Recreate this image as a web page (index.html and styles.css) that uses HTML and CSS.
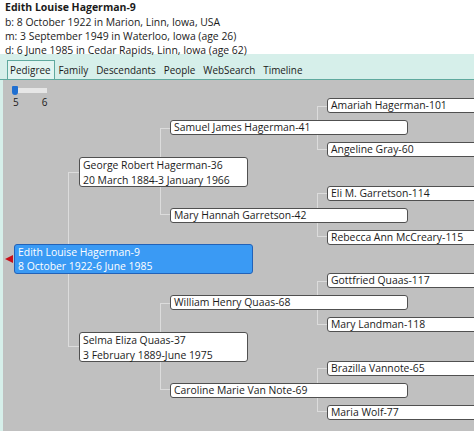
FILE: index.html
```html
<!DOCTYPE html>
<html>
<head>
<meta charset="utf-8">
<link rel="stylesheet" href="styles.css">
</head>
<body>
<div class="header">
  <div class="name">Edith Louise Hagerman-9</div>
  <div class="line">b: 8 October 1922 in Marion, Linn, Iowa, USA</div>
  <div class="line">m: 3 September 1949 in Waterloo, Iowa (age 26)</div>
  <div class="line">d: 6 June 1985 in Cedar Rapids, Linn, Iowa (age 62)</div>
</div>
<div class="tabs-area">
  <div class="tabs">
    <span class="tab active">Pedigree</span>
    <span class="tab">Family</span>
    <span class="tab">Descendants</span>
    <span class="tab">People</span>
    <span class="tab">WebSearch</span>
    <span class="tab">Timeline</span>
  </div>
  <div class="panel">
    <div class="slider">
      <div class="track"><div class="thumb"></div></div>
      <div class="ticks"><span>5</span><span>6</span></div>
    </div>
    <div class="tree">
      <div class="bracket b1 r19"></div>
      <div class="bracket b2 r15"></div>
      <div class="bracket b2 r59"></div>
      <div class="bracket b3 r13"></div>
      <div class="bracket b3 r35"></div>
      <div class="bracket b3 r57"></div>
      <div class="bracket b3 r79"></div>

      <div class="node g0 r19 selected">Edith Louise Hagerman-9<br>8 October 1922-6 June 1985</div>

      <div class="node g1 r15">George Robert Hagerman-36<br>20 March 1884-3 January 1966</div>
      <div class="node g1 r59">Selma Eliza Quaas-37<br>3 February 1889-June 1975</div>

      <div class="node g2 r13">Samuel James Hagerman-41</div>
      <div class="node g2 r35">Mary Hannah Garretson-42</div>
      <div class="node g2 r57">William Henry Quaas-68</div>
      <div class="node g2 r79">Caroline Marie Van Note-69</div>

      <div class="node g3 r12">Amariah Hagerman-101</div>
      <div class="node g3 r23">Angeline Gray-60</div>
      <div class="node g3 r34">Eli M. Garretson-114</div>
      <div class="node g3 r45">Rebecca Ann McCreary-115</div>
      <div class="node g3 r56">Gottfried Quaas-117</div>
      <div class="node g3 r67">Mary Landman-118</div>
      <div class="node g3 r78">Brazilla Vannote-65</div>
      <div class="node g3 r89">Maria Wolf-77</div>
    </div>
  </div>
</div>
</body>
</html>
```
FILE: styles.css
```css
html, body {
  margin: 0;
  padding: 0;
}
body {
  width: 474px;
  height: 431px;
  overflow: hidden;
  background: #ffffff;
  font-family: "Open Sans", "Noto Sans", sans-serif;
  font-size: 10.4px;
  color: #1b1b1b;
}
.header {
  height: 54px;
  padding-left: 5px;
  background: #ffffff;
}
.name {
  font-weight: 700;
  line-height: 15px;
  font-size: 10.5px;
}
.line {
  line-height: 14px;
}
.tabs-area {
  height: 377px;
  background: #d6efea;
  display: flex;
  flex-direction: column;
}
.tabs {
  height: 26px;
  box-sizing: border-box;
  display: flex;
  align-items: flex-end;
  padding-left: 7px;
  border-bottom: 1px solid #5fa99e;
  font-size: 9.9px;
}
.tab {
  height: 19px;
  line-height: 18px;
  padding: 0 3px;
  border: 1px solid transparent;
  border-bottom: none;
  box-sizing: border-box;
}
.tab.active {
  border-color: #5fa99e;
  background: #e2f5f1;
  padding-left: 2px;
}
.panel {
  flex: 1;
  margin-left: 3px;
  background: #c0c0c0;
  position: relative;
  overflow: hidden;
}
.slider {
  position: absolute;
  left: 9px;
  top: 6px;
  z-index: 2;
}
.track {
  width: 35px;
  height: 5px;
  margin-top: 2px;
  background: #e6e6e6;
  position: relative;
}
.thumb {
  position: absolute;
  left: 0;
  top: -2px;
  width: 6px;
  height: 9px;
  background: #1f6fd1;
  border-radius: 1px 1px 3px 3px;
}
.ticks {
  display: flex;
  gap: 23px;
  padding-left: 1px;
  margin-top: 3px;
  font-size: 10px;
  line-height: 12px;
}
.tree {
  display: grid;
  grid-template-columns: 100%;
  grid-template-rows: repeat(8, 43.75px);
  padding-top: 4px;
}
.r19 { grid-row: 1 / 9; }
.r15 { grid-row: 1 / 5; }
.r59 { grid-row: 5 / 9; }
.r13 { grid-row: 1 / 3; }
.r35 { grid-row: 3 / 5; }
.r57 { grid-row: 5 / 7; }
.r79 { grid-row: 7 / 9; }
.r12 { grid-row: 1 / 2; }
.r23 { grid-row: 2 / 3; }
.r34 { grid-row: 3 / 4; }
.r45 { grid-row: 4 / 5; }
.r56 { grid-row: 5 / 6; }
.r67 { grid-row: 6 / 7; }
.r78 { grid-row: 7 / 8; }
.r89 { grid-row: 8 / 9; }

.bracket {
  grid-column: 1;
  align-self: center;
  justify-self: start;
  height: 50%;
  box-sizing: border-box;
  border: 1px solid #dcdcdc;
  border-right: none;
}
.b1 { margin-left: 65px; width: 11px; }
.b2 { margin-left: 157px; width: 13px; }
.b3 { margin-left: 314px; width: 13px; }

.node {
  grid-column: 1;
  align-self: center;
  justify-self: start;
  position: relative;
  z-index: 1;
  box-sizing: border-box;
  background: #ffffff;
  border: 1px solid #505050;
  border-radius: 3px;
  padding: 0 3px;
  white-space: nowrap;
  color: #1b1b1b;
}
.g0, .g1 {
  height: 30px;
  line-height: 14px;
  padding-top: 0;
}
.g0 {
  margin-left: 11px;
  width: 239px;
}
.g1 {
  margin-left: 76px;
  width: 169px;
  line-height: 15px;
}
.g2 {
  margin-left: 167px;
  width: 238px;
  height: 15px;
  line-height: 13px;
}
.g3 {
  margin-left: 324px;
  width: 170px;
  height: 15px;
  line-height: 13px;
}
.selected {
  background: #3a9af4;
  border-color: #2262b8;
  color: #ffffff;
}
.selected::before {
  content: "";
  position: absolute;
  left: -10px;
  top: 10px;
  width: 0;
  height: 0;
  border-top: 4px solid transparent;
  border-bottom: 4px solid transparent;
  border-right: 8px solid #c8101a;
}
```
